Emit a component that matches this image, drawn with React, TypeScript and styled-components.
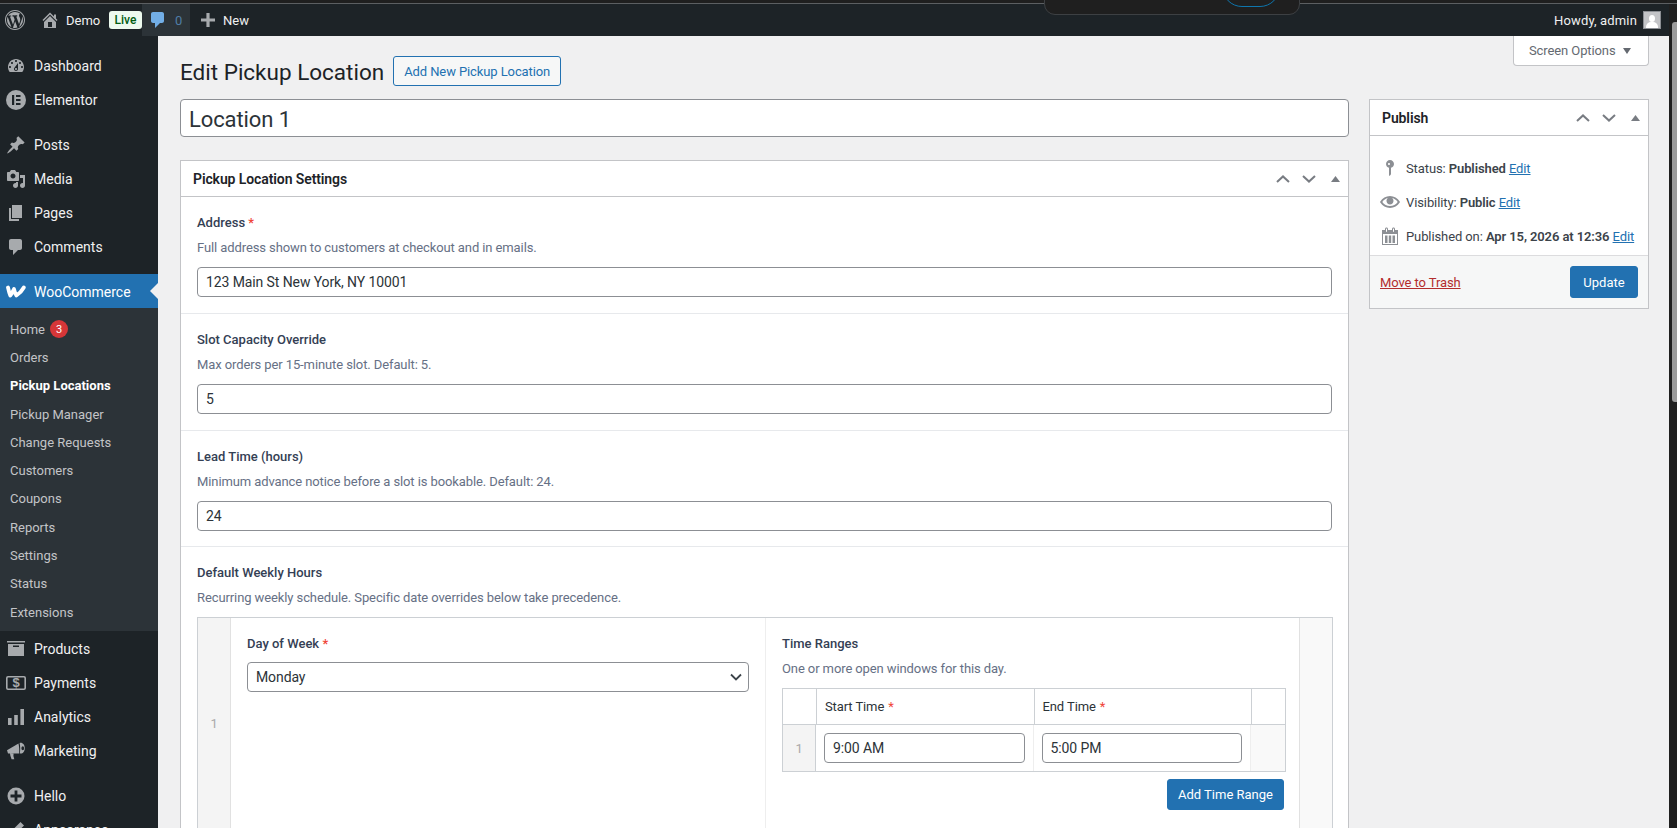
import React from "react";
import styled, { createGlobalStyle } from "styled-components";

const FONT = `Roboto, "Open Sans", "Liberation Sans", sans-serif`;

const GlobalStyle = createGlobalStyle`
  html, body { margin: 0; padding: 0; height: 100%; overflow: hidden; background: #f0f0f1; }
  * { box-sizing: border-box; }
  body { font-family: ${FONT}; font-size: 13px; color: #3c434a; letter-spacing: -0.1px; }
`;

const paths: Record<string, string> = {
  wp: "M20 10c0-5.52-4.48-10-10-10S0 4.48 0 10s4.48 10 10 10 10-4.48 10-10zM10 1.01c4.97 0 8.99 4.02 8.99 8.99s-4.02 8.99-8.99 8.99S1.01 14.97 1.01 10 5.03 1.01 10 1.01zM8.01 14.82L4.96 6.61c.49-.03 1.05-.08 1.05-.08.43-.05.38-1.01-.06-.99 0 0-1.29.1-2.13.1-.15 0-.33 0-.52-.01 1.44-2.17 3.9-3.6 6.7-3.6 2.09 0 3.99.79 5.41 2.09-.6-.08-1.45.35-1.45 1.42 0 .66.38 1.22.79 1.88.31.54.5 1.22.5 2.21 0 1.34-1.27 4.48-1.27 4.48l-2.71-7.5c.48-.03.75-.16.75-.16.43-.05.38-1.1-.05-1.08 0 0-1.3.11-2.14.11-.78 0-2.11-.11-2.11-.11-.43-.02-.48 1.06-.05 1.08l.84.08 1.12 3.04zm6.02 2.15L16.64 10s.67-1.69.39-3.81c.63 1.14.94 2.42.94 3.81 0 2.96-1.56 5.58-3.94 6.97zM2.68 6.77L6.5 17.25c-2.67-1.3-4.47-4.08-4.47-7.25 0-1.16.2-2.23.65-3.23zm7.45 4.53l2.29 6.25c-.75.27-1.57.42-2.42.42-.72 0-1.41-.11-2.06-.3z",
  home: "M16 8.5l1.53 1.53-1.06 1.06L10 4.62l-6.47 6.47-1.06-1.06L10 2.5l4 4v-2h2v4zm-6-2.46l6 5.99V18H4v-5.97zM12 17v-5H8v5h4z",
  comment: "M5 2h9c1.1 0 2 .9 2 2v7c0 1.1-.9 2-2 2h-2l-5 5v-5H5c-1.1 0-2-.9-2-2V4c0-1.1.9-2 2-2z",
  plus: "M8.4 3h3.2v5.4H17v3.2h-5.4V17H8.4v-5.4H3V8.4h5.4z",
  dashboard: "M3.76 16h12.48c1.1-1.37 1.76-3.11 1.76-5 0-4.42-3.58-8-8-8s-8 3.58-8 8c0 1.89.66 3.63 1.76 5zM10 4c.55 0 1 .45 1 1s-.45 1-1 1-1-.45-1-1 .45-1 1-1zM6 6c.55 0 1 .45 1 1s-.45 1-1 1-1-.45-1-1 .45-1 1-1zm8 0c.55 0 1 .45 1 1s-.45 1-1 1-1-.45-1-1 .45-1 1-1zm-5.37 5.55L12 7v6c0 1.1-.9 2-2 2s-2-.9-2-2c0-.57.24-1.08.63-1.45zM4 10c.55 0 1 .45 1 1s-.45 1-1 1-1-.45-1-1 .45-1 1-1zm12 0c.55 0 1 .45 1 1s-.45 1-1 1-1-.45-1-1 .45-1 1-1zm-5 3c0-.55-.45-1-1-1s-1 .45-1 1 .45 1 1 1 1-.45 1-1z",
  post: "M10.44 3.02l1.82-1.82 6.36 6.35-1.83 1.82c-1.05-.68-2.48-.57-3.41.36l-.75.75c-.92.93-1.04 2.35-.35 3.41l-1.83 1.82-2.41-2.41-2.8 2.79c-.42.42-3.38 2.71-3.8 2.29s1.86-3.39 2.28-3.81l2.79-2.79L4.1 9.36l1.83-1.82c1.05.69 2.48.57 3.4-.36l.75-.75c.93-.92 1.05-2.35.36-3.41z",
  media: "M13 11V4c0-.55-.45-1-1-1h-1.67L9 1H5L3.67 3H2c-.55 0-1 .45-1 1v7c0 .55.45 1 1 1h10c.55 0 1-.45 1-1zM7 4.5c1.38 0 2.5 1.12 2.5 2.5S8.38 9.5 7 9.5 4.5 8.38 4.5 7 5.62 4.5 7 4.5zM14 6h5v10.5c0 1.38-1.12 2.5-2.5 2.5S14 17.88 14 16.5s1.12-2.5 2.5-2.5c.17 0 .34.02.5.05V9h-3V6zm-4 8.05V13h2v3.5c0 1.38-1.12 2.5-2.5 2.5S7 17.88 7 16.5 8.12 14 9.5 14c.17 0 .34.02.5.05z",
  page: "M6 15V2h10v13H6zm-1 1h8v2H3V5h2v11z",
  archive: "M19 2v1.6H1V2h18zM2 5h16v12H2V5zm11 3V6.6H7V8h6z",
  bars: "M2 11h3.6v7H2zM8.2 8h3.6v10H8.2zM14.4 2H18v16h-3.6z",
  megaphone: "M1 9.2L12.5 2.5c.7 3.4 1 6.6.6 10L2 12.4zM4 12.6l3.6.2-.2 2.2.9 3.2H5.6l-1.2-3.4zM13.6 2c2.9-.8 5.2 1.7 5.2 5.2s-2.3 6-5 5.2c.6-3.3.5-7-.2-10.4zm1.8 5.2c0 1.2.6 2 1.4 2s1.3-.9 1.3-2-.6-2-1.3-2-1.4.9-1.4 2z",
  brush: "M14.5 2l3.5 3.5-7.5 7.5L7 9.5zM6 10.5L9.5 14c-.7 2.6-3.6 4-7.5 4 1.6-1.4 1.2-3 1.6-4.6.3-1.2 1.2-2.3 2.4-2.9z",
  status: "M14 6c0 1.86-1.28 3.41-3 3.86V16c0 1-2 2-2 2V9.86c-1.72-.45-3-2-3-3.86 0-2.21 1.79-4 4-4s4 1.79 4 4zM8 6c0 .55.45 1 1 1s1-.45 1-1-.45-1-1-1-1 .45-1 1z",
  eye: "M19.7 9.4C17.7 6 14 3.9 10 3.9S2.3 6 .3 9.4L0 10l.3.6c2 3.4 5.7 5.5 9.7 5.5s7.7-2.1 9.7-5.5l.3-.6-.3-.6zM10 14.1c-3.1 0-6-1.6-7.7-4.1C3.6 8 5.7 6.6 8 6.1c-.9.6-1.5 1.7-1.5 2.9 0 1.9 1.6 3.5 3.5 3.5s3.5-1.6 3.5-3.5c0-1.2-.6-2.3-1.5-2.9 2.3.5 4.4 1.9 5.7 3.9-1.7 2.5-4.6 4.1-7.7 4.1z",
  calendar: "M15 4h3v15H2V4h3V3c0-.41.15-.76.44-1.06.29-.29.65-.44 1.06-.44s.77.15 1.06.44c.29.3.44.65.44 1.06v1h4V3c0-.41.15-.76.44-1.06.29-.29.65-.44 1.06-.44s.77.15 1.06.44c.29.3.44.65.44 1.06v1zM6 3v2.5c0 .14.05.26.15.36.09.09.21.14.35.14s.26-.05.35-.14c.1-.1.15-.22.15-.36V3c0-.14-.05-.26-.15-.35-.09-.1-.21-.15-.35-.15s-.26.05-.35.15c-.1.09-.15.21-.15.35zm7 0v2.5c0 .14.05.26.14.36.1.09.22.14.36.14s.26-.05.36-.14c.09-.1.14-.22.14-.36V3c0-.14-.05-.26-.14-.35-.1-.1-.22-.15-.36-.15s-.26.05-.36.15c-.09.09-.14.21-.14.35zm4 15V8H3v10h14zM5 9.5h2.5V17H5zm3.8 0h2.4V17H8.8zm3.7 0H15V17h-2.5z",
};

const Icon = ({ name, size = 20, color = "#a7aaad" }: { name: string; size?: number; color?: string }) => (
  <svg width={size} height={size} viewBox="0 0 20 20" fill={color} fillRule="evenodd" style={{ flex: "none" }}>
    <path d={paths[name]} />
  </svg>
);

const ElementorIcon = () => (
  <svg width="20" height="20" viewBox="0 0 20 20" style={{ flex: "none" }}>
    <circle cx="10" cy="10" r="10" fill="#a7aaad" />
    <path d="M6 5h2.2v10H6zM10 5h4.5v2H10zM10 9h4.5v2H10zM10 13h4.5v2H10z" fill="#1d2327" />
  </svg>
);

const WooIcon = () => (
  <svg width="20" height="20" viewBox="0 0 20 20" style={{ flex: "none" }}>
    <path d="M2 5.5c.6 2.7 1.3 5.6 2.3 8 1.6-1.9 2.6-4 3.7-6.4.6 2.4 1.2 4.5 2.4 6.4 2.4-1.5 5.4-4.4 7.4-8" fill="none" stroke="#fff" strokeWidth="3.8" strokeLinecap="round" strokeLinejoin="round" />
  </svg>
);

const PaymentsIcon = () => (
  <svg width="20" height="20" viewBox="0 0 20 20" style={{ flex: "none" }}>
    <rect x="0.8" y="3.8" width="18.4" height="12.4" rx="1.2" fill="none" stroke="#a7aaad" strokeWidth="1.6" />
    <text x="10" y="14.4" textAnchor="middle" fontSize="13" fontWeight="700" fontFamily="Liberation Sans, sans-serif" fill="#a7aaad">$</text>
  </svg>
);

const HelloIcon = () => (
  <svg width="20" height="20" viewBox="0 0 20 20" style={{ flex: "none" }}>
    <circle cx="10" cy="10" r="8.5" fill="#a7aaad" />
    <path d="M8.6 4.5h2.8v4.1h4.1v2.8h-4.1v4.1H8.6v-4.1H4.5V8.6h4.1z" fill="#1d2327" />
  </svg>
);

const Frame = styled.div`
  width: 1677px;
  height: 828px;
  display: flex;
  flex-direction: column;
  overflow: hidden;
  position: relative;
`;

const TopStrip = styled.div`
  flex: none;
  height: 4px;
  background: #1f1f1f;
  border-bottom: 1px solid #5c5f62;
`;

const BrowserNotch = styled.div`
  position: absolute;
  left: 1044px;
  top: -2px;
  width: 256px;
  height: 17px;
  background: #1f1f1f;
  border: 1px solid #3d4043;
  border-radius: 0 0 11px 11px;
  overflow: hidden;
  z-index: 5;
`;

const NotchArc = styled.div`
  position: absolute;
  left: 177px;
  top: -20px;
  width: 58px;
  height: 28px;
  border: 1px solid #0f76ad;
  border-radius: 0 0 20px 20px;
`;

const AdminBar = styled.header`
  flex: none;
  height: 32px;
  background: #1d2327;
  display: flex;
  align-items: center;
  padding-left: 5px;
  color: #f0f0f1;
  font-size: 13px;
  letter-spacing: 0;
`;

const BarHome = styled.div`
  display: flex;
  align-items: center;
  margin-left: 15px;
  gap: 6px;
  width: 69px;
`;

const LiveBadge = styled.span`
  width: 33px;
  height: 18px;
  display: flex;
  align-items: center;
  justify-content: center;
  background: #edfaef;
  color: #005c12;
  border-radius: 3px;
  font-size: 12px;
  font-weight: 500;
`;

const BarComments = styled.div`
  width: 48px;
  height: 32px;
  background: #2c3338;
  display: flex;
  align-items: center;
  gap: 7px;
  padding-left: 6px;
  color: #4f7da6;
`;

const BarNew = styled.div`
  display: flex;
  align-items: center;
  gap: 5px;
  margin-left: 8px;
`;

const BarAccount = styled.div`
  margin-left: auto;
  margin-right: 16px;
  display: flex;
  align-items: center;
  gap: 6px;
  letter-spacing: 0.15px;
`;

const Avatar = styled.div`
  width: 18px;
  height: 18px;
  background: #c3c4c7;
  border: 1px solid #8c8f94;
  position: relative;
  overflow: hidden;
  &::before {
    content: "";
    position: absolute;
    left: 5px;
    top: 3px;
    width: 6px;
    height: 7px;
    border-radius: 50%;
    background: #fff;
  }
  &::after {
    content: "";
    position: absolute;
    left: 2px;
    top: 10px;
    width: 12px;
    height: 8px;
    border-radius: 5px 5px 0 0;
    background: #fff;
  }
`;

const Body = styled.div`
  flex: 1;
  min-height: 0;
  display: flex;
`;

const Sidebar = styled.nav`
  flex: none;
  width: 158px;
  background: #1d2327;
  padding-top: 12px;
  overflow: hidden;
  letter-spacing: 0;
`;

const MenuItem = styled.div<{ $gap?: boolean; $active?: boolean }>`
  height: 34px;
  margin-top: ${(p) => (p.$gap ? "11px" : "0")};
  padding: 2px 0 0 6px;
  display: flex;
  align-items: center;
  gap: 8px;
  font-size: 14px;
  color: #f0f0f1;
  position: relative;
  background: ${(p) => (p.$active ? "#2271b1" : "transparent")};
  color: ${(p) => (p.$active ? "#fff" : "#f0f0f1")};
  ${(p) =>
    p.$active &&
    `&::after {
      content: "";
      position: absolute;
      right: 0;
      top: 9px;
      border: 8px solid transparent;
      border-right-color: #f0f0f1;
      border-left-width: 0;
    }`}
`;

const SubMenu = styled.div`
  background: #2c3338;
  padding: 7px 0 5px;
`;

const SubItem = styled.div<{ $current?: boolean }>`
  height: 28.3px;
  padding-left: 10px;
  display: flex;
  align-items: center;
  gap: 5px;
  font-size: 13px;
  font-weight: ${(p) => (p.$current ? 700 : 400)};
  color: ${(p) => (p.$current ? "#fff" : "#c3c4c7")};
`;

const CountBadge = styled.span`
  width: 18px;
  height: 18px;
  border-radius: 50%;
  background: #d63638;
  color: #fff;
  font-size: 11px;
  display: flex;
  align-items: center;
  justify-content: center;
`;

const Main = styled.main`
  flex: 1;
  min-width: 0;
  padding: 0 28px 0 22px;
`;

const HeaderRow = styled.div`
  height: 63px;
  display: flex;
  align-items: flex-start;
`;

const TitleGroup = styled.div`
  margin-top: 20px;
  display: flex;
  align-items: center;
  gap: 9px;
`;

const PageTitle = styled.h1`
  margin: 0;
  height: 30px;
  font-size: 22.5px;
  line-height: 32px;
  font-weight: 400;
  color: #1d2327;
  letter-spacing: 0;
`;

const OutlineButton = styled.button`
  height: 30px;
  padding: 0 10px;
  background: #f6f7f7;
  border: 1px solid #2271b1;
  border-radius: 3px;
  color: #2271b1;
  font: 13px ${FONT};
  letter-spacing: -0.1px;
`;

const ScreenOptions = styled.div`
  margin-left: auto;
  width: 136px;
  height: 30px;
  background: #fff;
  border: 1px solid #c3c4c7;
  border-top: 0;
  border-radius: 0 0 4px 4px;
  color: #646970;
  display: flex;
  align-items: center;
  gap: 7px;
  padding-left: 15px;
`;

const DownCaret = styled.span`
  width: 0;
  height: 0;
  border: 4px solid transparent;
  border-top: 6px solid #646970;
  border-bottom: 0;
`;

const Columns = styled.div`
  display: flex;
  align-items: flex-start;
  gap: 20px;
`;

const PostBody = styled.div`
  width: 1169px;
  flex: none;
`;

const TitleInput = styled.input`
  display: block;
  width: 100%;
  height: 38px;
  padding: 2px 8px 0;
  margin-bottom: 23px;
  border: 1px solid #8c8f94;
  border-radius: 4px;
  font: 22px ${FONT};
  letter-spacing: -0.1px;
  color: #2c3338;
  background: #fff;
`;

const Postbox = styled.section`
  background: #fff;
  border: 1px solid #c3c4c7;
`;

const BoxHeader = styled.div<{ $h: number }>`
  height: ${(p) => p.$h}px;
  border-bottom: 1px solid #c3c4c7;
  display: flex;
  align-items: center;
  justify-content: space-between;
  padding-left: 12px;
  padding-right: 0;
`;

const BoxTitle = styled.h2`
  margin: 0;
  font-size: 14px;
  font-weight: 600;
  color: #1d2327;
`;

const HandleRow = styled.div`
  display: flex;
`;

const HandleBtn = styled.span`
  width: 26px;
  height: 20px;
  display: flex;
  align-items: center;
  justify-content: center;
`;

const Handles = () => (
  <HandleRow>
    <HandleBtn>
      <svg width="14" height="8" viewBox="0 0 14 8"><path d="M1 7l6-5.6L13 7" fill="none" stroke="#787c82" strokeWidth="2" /></svg>
    </HandleBtn>
    <HandleBtn>
      <svg width="14" height="8" viewBox="0 0 14 8"><path d="M1 1l6 5.6L13 1" fill="none" stroke="#787c82" strokeWidth="2" /></svg>
    </HandleBtn>
    <HandleBtn>
      <svg width="9" height="6" viewBox="0 0 9 6"><path d="M4.5 0L9 6H0z" fill="#787c82" /></svg>
    </HandleBtn>
  </HandleRow>
);

const Field = styled.div`
  padding: 17px 16px 15.75px;
  border-bottom: 1px solid #e7e9ec;
  &:last-child {
    border-bottom: 0;
  }
`;

const Label = styled.label`
  display: block;
  font-size: 13px;
  line-height: 18px;
  font-weight: 500;
  color: #344054;
  letter-spacing: 0;
`;

const Required = styled.span`
  color: #f04438;
`;

const Hint = styled.p`
  margin: 7px 0 10px;
  font-size: 13px;
  line-height: 18px;
  color: #667085;
`;

const TextInput = styled.input`
  display: block;
  width: 100%;
  height: 30px;
  padding: 0 8px;
  border: 1px solid #8c8f94;
  border-radius: 4px;
  background: #fff;
  color: #2c3338;
  font: 14px ${FONT};
  letter-spacing: -0.1px;
`;

const Repeater = styled.div`
  display: grid;
  grid-template-columns: 33px 1fr 33px;
  margin-right: -1px;
  border: 1px solid #ccd0d4;
`;

const RowHandle = styled.div`
  background: #f4f4f4;
  color: #aaa;
  border-right: 1px solid #e1e1e1;
  display: flex;
  align-items: center;
  justify-content: center;
`;

const RowFields = styled.div`
  display: grid;
  grid-template-columns: 1fr 1fr;
`;

const RowActions = styled.div`
  background: #f9f9f9;
  border-left: 1px solid #e1e1e1;
`;

const SubField = styled.div`
  padding: 17px 16px 18px;
  & + & {
    border-left: 1px solid #eee;
    padding-right: 13px;
  }
`;

const SelectBox = styled.div`
  height: 30px;
  margin-top: 9px;
  padding: 0 6px 0 8px;
  border: 1px solid #8c8f94;
  border-radius: 4px;
  color: #2c3338;
  font-size: 14px;
  display: flex;
  align-items: center;
  justify-content: space-between;
`;

const InnerTable = styled.div`
  display: grid;
  grid-template-columns: 33px 1fr 1fr 34px;
  border: 1px solid #ccd0d4;
`;

const HeadCell = styled.div`
  height: 36px;
  padding-left: 8px;
  display: flex;
  align-items: center;
  gap: 4px;
  border-left: 1px solid #ccd0d4;
  border-bottom: 1px solid #ccd0d4;
  color: #2c3338;
  font-weight: 400;
  &:first-child {
    border-left: 0;
  }
`;

const InnerHandle = styled(RowHandle)`
  border-right: 1px solid #ccd0d4;
`;

const InnerCell = styled.div`
  height: 46px;
  padding: 8px;
  border-right: 1px solid #eee;
`;

const InnerActions = styled.div`
  background: #f9f9f9;
`;

const ButtonRow = styled.div`
  display: flex;
  justify-content: flex-end;
  margin-top: 7px;
  padding-right: 2px;
`;

const PrimaryButton = styled.button`
  height: 31px;
  padding: 0 10px;
  background: #2271b1;
  border: 1px solid #2271b1;
  border-radius: 3px;
  color: #fff;
  font: 13px ${FONT};
`;

const SideColumn = styled.aside`
  width: 280px;
  flex: none;
`;

const MiscRows = styled.div`
  padding: 15px 0 2px 10px;
`;

const MiscRow = styled.div`
  height: 34px;
  display: flex;
  align-items: center;
  gap: 6px;
  white-space: nowrap;
`;

const MiscText = styled.span`
  color: #3c434a;
  b {
    font-weight: 600;
  }
`;

const EditLink = styled.a`
  color: #2271b1;
  text-decoration: underline;
`;

const PublishActions = styled.div`
  border-top: 1px solid #dcdcde;
  background: #f6f7f7;
  padding: 10px;
  display: flex;
  align-items: center;
  justify-content: space-between;
`;

const TrashLink = styled.a`
  color: #b32d2e;
  text-decoration: underline;
`;

const UpdateButton = styled(PrimaryButton)`
  height: 32px;
  width: 68px;
  padding: 0;
`;

const Scrollbar = styled.div`
  width: 8px;
  background: #1f1f1f;
  position: absolute;
  right: 0;
  top: 4px;
  bottom: 0;
  z-index: 4;
`;

const ScrollThumb = styled.div`
  margin: 18px 0 0 3px;
  height: 380px;
  background: #9b9b9b;
  border-radius: 3px 0 0 3px;
`;

const topMenu = [
  { key: "dash", label: "Dashboard", icon: <Icon name="dashboard" /> },
  { key: "el", label: "Elementor", icon: <ElementorIcon /> },
  { key: "posts", label: "Posts", icon: <Icon name="post" />, gap: true },
  { key: "media", label: "Media", icon: <Icon name="media" /> },
  { key: "pages", label: "Pages", icon: <Icon name="page" /> },
  { key: "comments", label: "Comments", icon: <Icon name="comment" /> },
];

const wooSub = ["Orders", "Pickup Locations", "Pickup Manager", "Change Requests", "Customers", "Coupons", "Reports", "Settings", "Status", "Extensions"];

const bottomMenu = [
  { key: "prod", label: "Products", icon: <Icon name="archive" /> },
  { key: "pay", label: "Payments", icon: <PaymentsIcon /> },
  { key: "an", label: "Analytics", icon: <Icon name="bars" /> },
  { key: "mk", label: "Marketing", icon: <Icon name="megaphone" /> },
  { key: "hello", label: "Hello", icon: <HelloIcon />, gap: true },
  { key: "app", label: "Appearance", icon: <Icon name="brush" /> },
];

const settings = [
  { label: "Address", required: true, hint: "Full address shown to customers at checkout and in emails.", value: "123 Main St New York, NY 10001" },
  { label: "Slot Capacity Override", hint: "Max orders per 15-minute slot. Default: 5.", value: "5" },
  { label: "Lead Time (hours)", hint: "Minimum advance notice before a slot is bookable. Default: 24.", value: "24" },
];

export default function App() {
  return (
    <Frame>
      <GlobalStyle />
      <TopStrip />
      <BrowserNotch>
        <NotchArc />
      </BrowserNotch>
      <AdminBar>
        <Icon name="wp" />
        <BarHome>
          <Icon name="home" />
          <span>Demo</span>
        </BarHome>
        <LiveBadge>Live</LiveBadge>
        <BarComments>
          <Icon name="comment" color="#72aee6" />
          <span>0</span>
        </BarComments>
        <BarNew>
          <Icon name="plus" />
          <span>New</span>
        </BarNew>
        <BarAccount>
          <span>Howdy, admin</span>
          <Avatar />
        </BarAccount>
      </AdminBar>
      <Body>
        <Sidebar>
          {topMenu.map((m) => (
            <MenuItem key={m.key} $gap={m.gap}>
              {m.icon}
              {m.label}
            </MenuItem>
          ))}
          <MenuItem $gap $active>
            <WooIcon />
            WooCommerce
          </MenuItem>
          <SubMenu>
            <SubItem>
              Home <CountBadge>3</CountBadge>
            </SubItem>
            {wooSub.map((s) => (
              <SubItem key={s} $current={s === "Pickup Locations"}>
                {s}
              </SubItem>
            ))}
          </SubMenu>
          {bottomMenu.map((m) => (
            <MenuItem key={m.key} $gap={m.gap}>
              {m.icon}
              {m.label}
            </MenuItem>
          ))}
        </Sidebar>
        <Main>
          <HeaderRow>
            <TitleGroup>
              <PageTitle>Edit Pickup Location</PageTitle>
              <OutlineButton>Add New Pickup Location</OutlineButton>
            </TitleGroup>
            <ScreenOptions>
              Screen Options <DownCaret />
            </ScreenOptions>
          </HeaderRow>
          <Columns>
            <PostBody>
              <TitleInput defaultValue="Location 1" />
              <Postbox>
                <BoxHeader $h={36}>
                  <BoxTitle>Pickup Location Settings</BoxTitle>
                  <Handles />
                </BoxHeader>
                {settings.map((f) => (
                  <Field key={f.label}>
                    <Label>
                      {f.label} {f.required && <Required>*</Required>}
                    </Label>
                    <Hint>{f.hint}</Hint>
                    <TextInput defaultValue={f.value} />
                  </Field>
                ))}
                <Field>
                  <Label>Default Weekly Hours</Label>
                  <Hint>Recurring weekly schedule. Specific date overrides below take precedence.</Hint>
                  <Repeater>
                    <RowHandle>1</RowHandle>
                    <RowFields>
                      <SubField>
                        <Label>
                          Day of Week <Required>*</Required>
                        </Label>
                        <SelectBox>
                          Monday
                          <svg width="12" height="8" viewBox="0 0 12 8">
                            <path d="M1 1.5l5 5 5-5" fill="none" stroke="#3c434a" strokeWidth="1.8" />
                          </svg>
                        </SelectBox>
                      </SubField>
                      <SubField>
                        <Label>Time Ranges</Label>
                        <Hint>One or more open windows for this day.</Hint>
                        <InnerTable>
                          <HeadCell />
                          <HeadCell>
                            Start Time <Required>*</Required>
                          </HeadCell>
                          <HeadCell>
                            End Time <Required>*</Required>
                          </HeadCell>
                          <HeadCell />
                          <InnerHandle>1</InnerHandle>
                          <InnerCell>
                            <TextInput defaultValue="9:00 AM" />
                          </InnerCell>
                          <InnerCell>
                            <TextInput defaultValue="5:00 PM" />
                          </InnerCell>
                          <InnerActions />
                        </InnerTable>
                        <ButtonRow>
                          <PrimaryButton>Add Time Range</PrimaryButton>
                        </ButtonRow>
                      </SubField>
                    </RowFields>
                    <RowActions />
                  </Repeater>
                </Field>
              </Postbox>
            </PostBody>
            <SideColumn>
              <Postbox>
                <BoxHeader $h={36}>
                  <BoxTitle>Publish</BoxTitle>
                  <Handles />
                </BoxHeader>
                <MiscRows>
                  <MiscRow>
                    <Icon name="status" color="#8c8f94" />
                    <MiscText>
                      Status: <b>Published</b> <EditLink>Edit</EditLink>
                    </MiscText>
                  </MiscRow>
                  <MiscRow>
                    <Icon name="eye" color="#8c8f94" />
                    <MiscText>
                      Visibility: <b>Public</b> <EditLink>Edit</EditLink>
                    </MiscText>
                  </MiscRow>
                  <MiscRow>
                    <Icon name="calendar" color="#8c8f94" />
                    <MiscText>
                      Published on: <b>Apr 15, 2026 at 12:36</b> <EditLink>Edit</EditLink>
                    </MiscText>
                  </MiscRow>
                </MiscRows>
                <PublishActions>
                  <TrashLink>Move to Trash</TrashLink>
                  <UpdateButton>Update</UpdateButton>
                </PublishActions>
              </Postbox>
            </SideColumn>
          </Columns>
        </Main>
      </Body>
      <Scrollbar>
        <ScrollThumb />
      </Scrollbar>
    </Frame>
  );
}
